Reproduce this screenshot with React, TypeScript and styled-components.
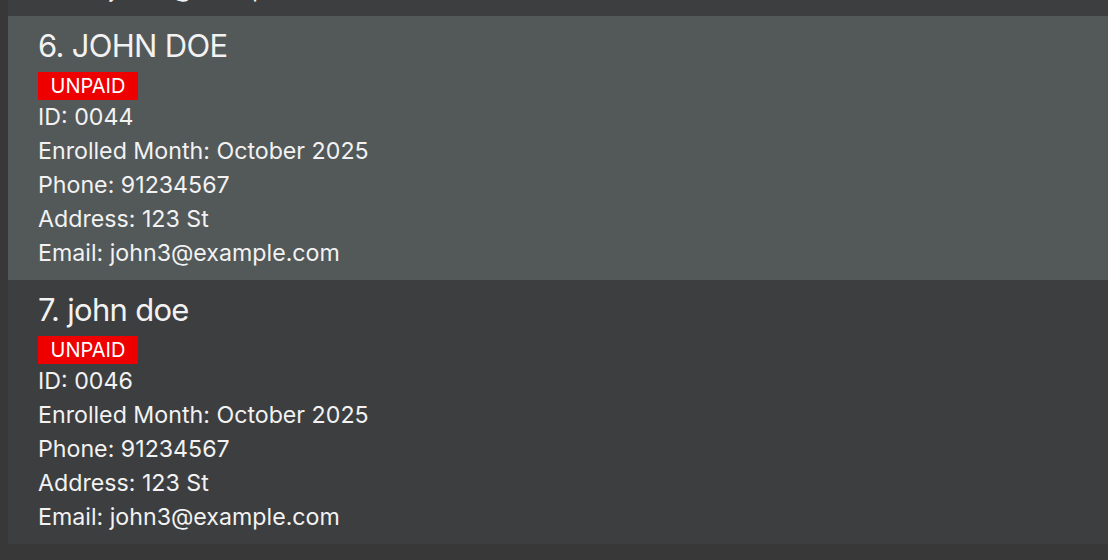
import React from "react";
import styled, { createGlobalStyle } from "styled-components";

const Global = createGlobalStyle`
  html, body { margin: 0; padding: 0; background: #383838; }
  body { font-family: Inter, "Noto Sans", sans-serif; overflow: hidden; }
`;

const Viewport = styled.div`
  width: 1108px;
  height: 560px;
  overflow: hidden;
  background: #383838;
  padding-left: 8px;
  box-sizing: border-box;
`;

const List = styled.div`
  display: flex;
  flex-direction: column;
  margin-top: -248px;
`;

const Card = styled.div<{ $selected?: boolean }>`
  display: flex;
  flex-direction: column;
  align-items: flex-start;
  height: 264px;
  box-sizing: border-box;
  padding: 10px 0 0 30px;
  background: ${(p) => (p.$selected ? "#535859" : "#3d3e40")};
  color: #f2f2f2;
`;

const Title = styled.div`
  font-size: 31px;
  line-height: 40px;
  height: 40px;
  margin-bottom: 6px;
  letter-spacing: -0.7px;
`;

const Badge = styled.span`
  display: inline-flex;
  align-items: center;
  justify-content: center;
  background: #ee0000;
  color: #ffffff;
  font-size: 20px;
  height: 28px;
  width: 100px;
  box-sizing: border-box;
`;

const Line = styled.div`
  font-size: 23.2px;
  line-height: 34px;
  height: 34px;
  letter-spacing: 0;
`;

type Person = {
  n: number;
  name: string;
  id: string;
};

const people: Person[] = [
  { n: 5, name: "John Doe", id: "0043" },
  { n: 6, name: "JOHN DOE", id: "0044" },
  { n: 7, name: "john doe", id: "0046" },
];

export default function App() {
  return (
    <>
      <Global />
      <Viewport>
        <List>
          {people.map((p) => (
            <Card key={p.n} $selected={p.n === 6}>
              <Title>
                {p.n}. {p.name}
              </Title>
              <Badge>UNPAID</Badge>
              <Line>ID: {p.id}</Line>
              <Line>Enrolled Month: October 2025</Line>
              <Line>Phone: 91234567</Line>
              <Line>Address: 123 St</Line>
              <Line>Email: john3@example.com</Line>
            </Card>
          ))}
        </List>
      </Viewport>
    </>
  );
}
